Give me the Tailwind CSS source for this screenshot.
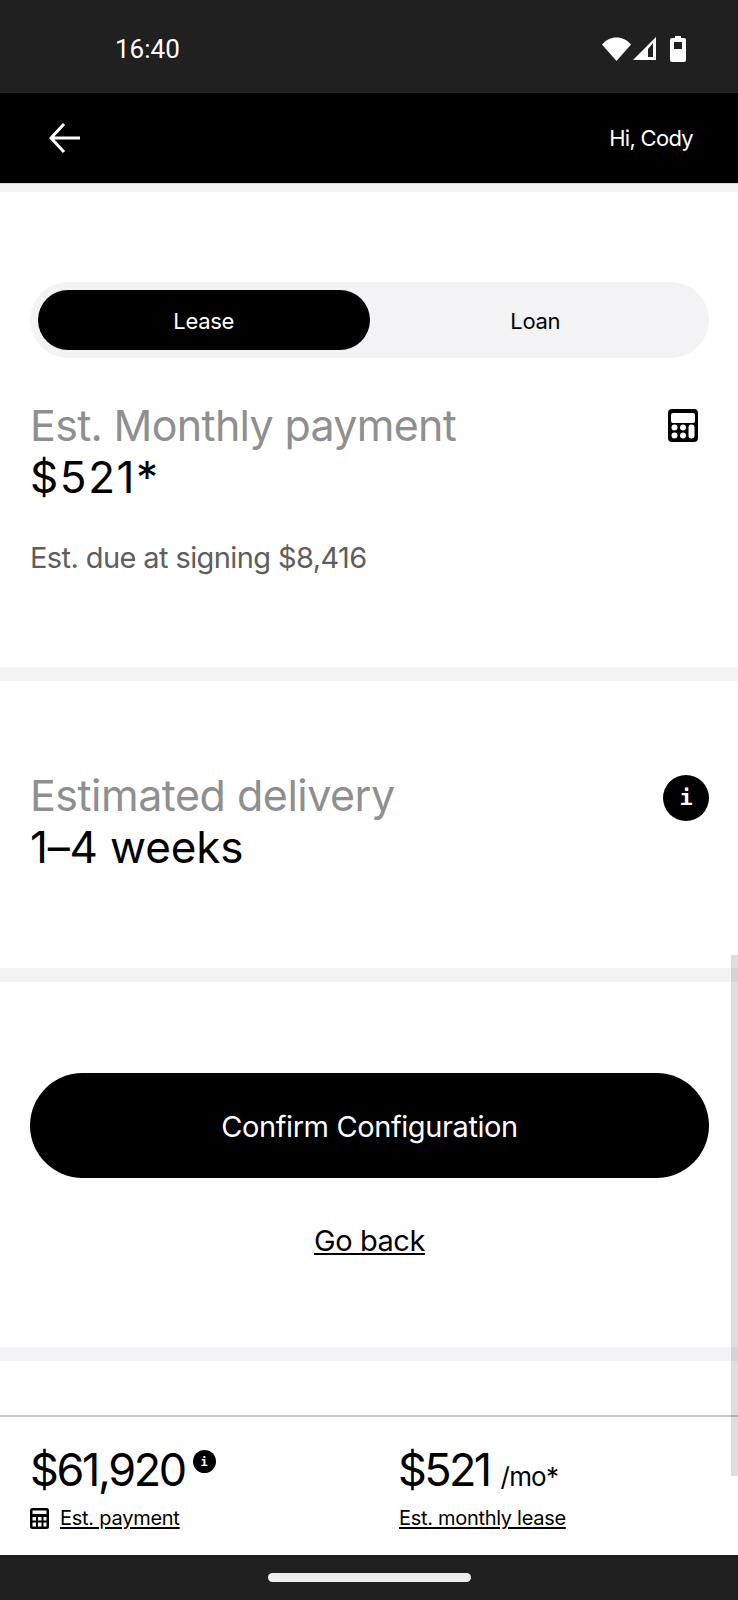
<!DOCTYPE html>
<html>
<head>
<meta charset="utf-8">
<script src="https://cdn.jsdelivr.net/npm/@tailwindcss/browser@4"></script>
</head>
<body class="bg-white">
<div class="relative w-[738px] h-[1600px] overflow-hidden flex flex-col bg-white font-['Inter',sans-serif] text-black">
  <div class="h-[93px] shrink-0 bg-[#202020] flex items-center justify-between pt-[4px] pl-[115px] pr-[52px] text-white">
    <span class="font-['Roboto',sans-serif] text-[26px] leading-none">16:40</span>
    <div class="flex items-center">
      <svg width="29" height="24" viewBox="0 0 29 24"><path d="M14.500 24 0 7.500C4 3 9 .5 14.500.5S25 3 29 7.500z" fill="#fff"/></svg>
      <svg class="ml-[2px]" width="24" height="24" viewBox="0 0 24 24"><path d="M0 23 23 0v23zM15 12v8h5V6z" fill="#fff" fill-rule="evenodd"/></svg>
      <svg class="ml-[13px]" width="16" height="26" viewBox="0 0 16 26"><path d="M5 0h6v2h3a2 2 0 0 1 2 2v20a2 2 0 0 1-2 2H2a2 2 0 0 1-2-2V4a2 2 0 0 1 2-2h3zM4 6v7h8V6z" fill="#fff" fill-rule="evenodd"/></svg>
    </div>
  </div>
  <div class="h-[90px] shrink-0 bg-black flex items-center justify-between pl-[49px] pr-[45px] text-white">
    <svg width="32" height="30" viewBox="0 0 32 30" fill="none" stroke="#fff" stroke-width="3"><path d="M31 15H3M15 1 2 15l13 14"/></svg>
    <span class="text-[22px] pt-[1px] tracking-[-0.7px]">Hi, Cody</span>
  </div>
  <div class="h-[9px] shrink-0 bg-[#f3f3f5] border-t border-[#d4d4d4]"></div>

  <section class="h-[475px] shrink-0 pt-[90px] pl-[30px] pr-[29px]">
    <div class="h-[76px] rounded-full bg-[#f3f3f5] p-2 flex text-[22px] tracking-[-0.3px]">
      <div class="flex-1 pt-[2px] rounded-full bg-black text-white flex items-center justify-center">Lease</div>
      <div class="flex-1 pt-[2px] flex items-center justify-center">Loan</div>
    </div>
    <div class="mt-[41px] flex justify-between items-start">
      <div>
        <div class="text-[43px] leading-[52px] text-[#8f8f8f] tracking-[-0.7px]">Est. Monthly payment</div>
        <div class="text-[44px] leading-[52px] tracking-[1.6px]">$521*</div>
      </div>
      <svg class="mr-[11px] mt-[10px]" width="30" height="33" viewBox="0 0 30 33"><path fill-rule="evenodd" d="M4 0h22a4 4 0 0 1 4 4v25a4 4 0 0 1-4 4H4a4 4 0 0 1-4-4V4a4 4 0 0 1 4-4zM5 4a2 2 0 0 0-2 2v6a2 2 0 0 0 2 2h20a2 2 0 0 0 2-2V6a2 2 0 0 0-2-2zM6.500 15.500a3 3 0 1 0 0 6 3 3 0 0 0 0-6zM15 15.500a3 3 0 1 0 0 6 3 3 0 0 0 0-6zM6.500 23.500a3 3 0 1 0 0 6 3 3 0 0 0 0-6zM15 23.500a3 3 0 1 0 0 6 3 3 0 0 0 0-6zM23.500 15.500a3 3 0 0 0-3 3v8a3 3 0 0 0 6 0v-8a3 3 0 0 0-3-3z" fill="#000"/></svg>
    </div>
    <div class="mt-[37px] text-[29px] leading-[36px] text-[#5e5e5e] tracking-[-0.6px]">Est. due at signing $8,416</div>
  </section>
  <div class="h-[14px] shrink-0 bg-[#f3f3f5]"></div>

  <section class="h-[287px] shrink-0 pt-[88px] pl-[30px] pr-[29px] flex justify-between items-start">
    <div>
      <div class="text-[43px] leading-[52px] text-[#8f8f8f] tracking-[-0.5px]">Estimated delivery</div>
      <div class="text-[44px] leading-[52px] tracking-[-0.15px]">1–4 weeks</div>
    </div>
    <div class="w-[46px] h-[46px] mt-[6px] rounded-full bg-black text-white flex items-center justify-center font-['DejaVu_Sans_Mono',monospace] font-bold text-[22px] leading-none">i</div>
  </section>
  <div class="h-[14px] shrink-0 bg-[#f3f3f5]"></div>

  <section class="h-[365px] shrink-0 pt-[91px] pl-[30px] pr-[29px] flex flex-col items-center">
    <div class="w-full h-[105px] pt-[2px] rounded-full bg-black text-white text-[29px] flex items-center justify-center tracking-[-0.4px]">Confirm Configuration</div>
    <a class="mt-[45px] text-[29px] leading-[36px] underline underline-offset-2 decoration-2 tracking-[-0.45px]">Go back</a>
  </section>
  <div class="h-[14px] shrink-0 bg-[#f3f3f5]"></div>

  <div class="h-[54px] shrink-0"></div>
  <footer class="h-[140px] shrink-0 border-t-2 border-[#c8c8c8] px-[30px] pt-[27px] flex">
    <div class="w-[369px] shrink-0">
      <div class="flex items-start h-[56px]">
        <span class="text-[45px] leading-[52px] tracking-[-2.4px]">$61,920</span>
        <span class="ml-[8px] mt-[6px] w-[23px] h-[23px] rounded-full bg-black text-white flex items-center justify-center font-['DejaVu_Sans_Mono',monospace] font-bold text-[12px] leading-none">i</span>
      </div>
      <div class="mt-[5px] flex items-center">
        <svg width="19" height="21" viewBox="0 0 19 21"><path fill-rule="evenodd" d="M2.500 0h14A2.500 2.500 0 0 1 19 2.500v16a2.500 2.500 0 0 1-2.500 2.500h-14A2.500 2.500 0 0 1 0 18.500v-16A2.500 2.500 0 0 1 2.500 0zM2.500 2.500V6h14V2.500zM2.500 9v3.500h3.500V9zM8 9v3.500h3.500V9zM13.500 9v3.500h3V9zM2.500 14.500v4h3.500v-4zM8 14.500v4h3.500v-4zM13.500 14.500v4h3v-4z" fill="#000"/></svg>
        <a class="ml-[11px] text-[20px] leading-[26px] underline underline-offset-2 tracking-[-0.25px]">Est. payment</a>
      </div>
    </div>
    <div>
      <div class="flex items-baseline h-[56px] -ml-[1px]">
        <span class="text-[45px] leading-[52px] tracking-[-2.6px]">$521</span>
        <span class="ml-[11px] text-[26px] tracking-[-0.8px]">/mo*</span>
      </div>
      <div class="mt-[5px]">
        <a class="text-[20px] leading-[26px] underline underline-offset-2 tracking-[-0.3px]">Est. monthly lease</a>
      </div>
    </div>
  </footer>
  <div class="flex-1 bg-[#202020] flex items-center justify-center">
    <div class="w-[203px] h-[9px] rounded-full bg-[#eeeeee]"></div>
  </div>
  <div class="absolute left-[731px] top-[955px] w-[7px] h-[521px] bg-black/[0.13]"></div>
</div>
</body>
</html>
